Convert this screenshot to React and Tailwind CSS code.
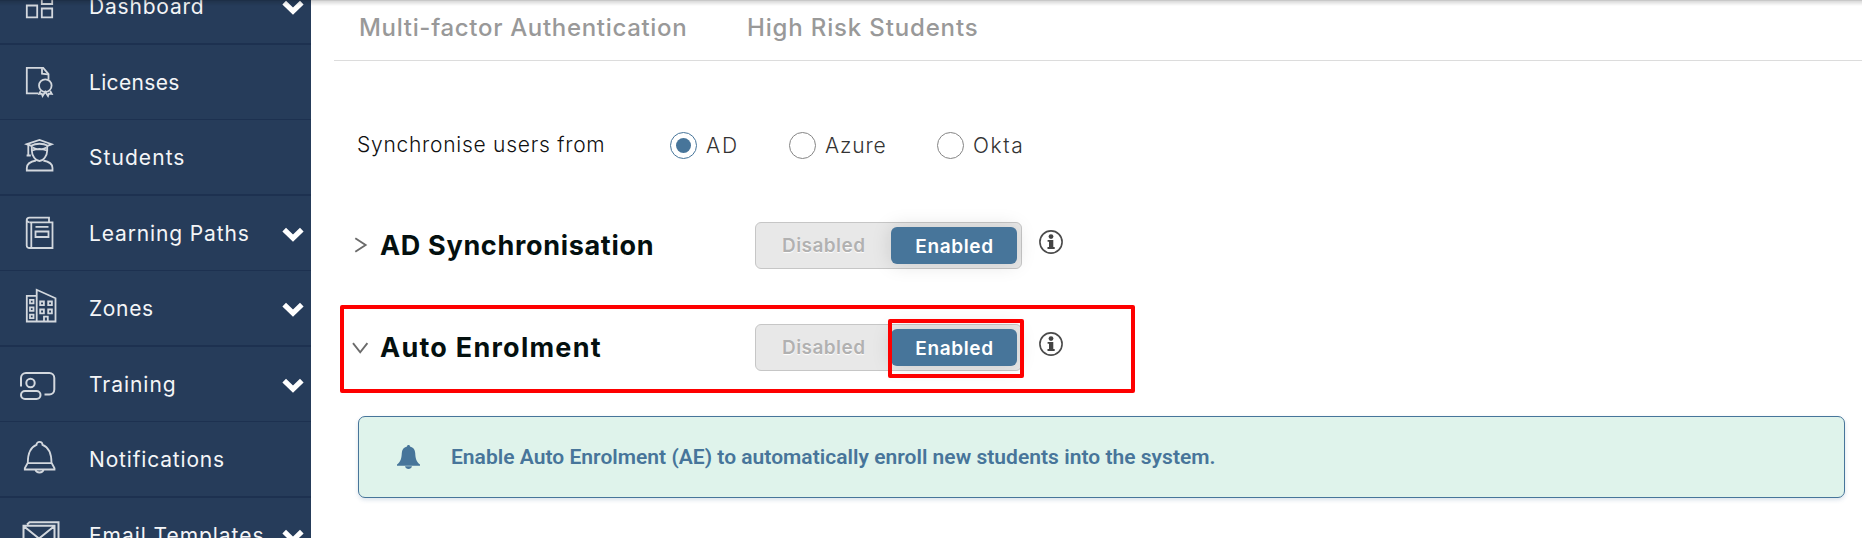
import React from 'react';
import clsx from 'clsx';

// Sidebar icons, all on the same 40x40 grid
const DashboardIcon = () => (
  <path d="M6.8 6h10.4v7H6.8zM21.8 6h10.4v12H21.8zM6.8 19.5h10.4v11.8H6.8zM21.8 22.5h10.4v8.8H21.8z" />
);

const LicenseIcon = () => (
  <>
    <path d="M18.5 31.3H6.8V5.9h16.4l5.3 6.2v5.6" />
    <path d="M22 6.2v5.4l6 .8" />
    <circle cx="25.3" cy="23.6" r="6.3" />
    <path d="M20.5 29l-1.3 3 2.6-.3.8 2.3 2.7-4.3 2.7 4.3.8-2.3 3 .3-1.6-3" />
  </>
);

const StudentIcon = () => (
  <>
    <path d="M6.8 7.2L19.5 3l12.2 4.2L28 8.7c-5-2.6-12-2.6-17 0z" />
    <path d="M8.3 8v10M6.6 18.5h4.2M11.8 9v4.5c0 5.5 4 10.5 7.7 10.5s7.7-5 7.7-10.5V9" />
    <path d="M12 13.5c4.5-2 10.5-2 15 0M12.6 10.5c4 2.5 10 2.5 14 0" />
    <path d="M16 23.5C10.5 24.5 6.8 27 6.8 31v2.5h25.7V31c0-4-3.7-6.5-9.2-7.5" />
  </>
);

const BookIcon = () => (
  <>
    <path d="M9.5 9.3h23V35h-23c-1.6 0-2.8-1-2.8-2.6V7.2c0-1.6 1.2-2.6 2.8-2.6H29v4.5" />
    <path d="M6.9 7.5c.3 1.2 1.2 1.8 2.6 1.8M11.3 9.5v25.3M15.5 13.8h13M15.5 18.5h13V24h-13z" />
  </>
);

const BuildingIcon = () => (
  <>
    <path d="M6.8 7.8h9.9v25.7H6.8zM16.7 33.5V1.8l18.8 8.5v23.2z" />
    <path d="M10 11.8h3.5v3.5H10zM10 19.3h3.5v3.5H10zM10 26.7h3.5v3.5H10z" />
    <path d="M20.2 13.5h3.7v3.7h-3.7zM28.2 13.5h3.7v3.7h-3.7zM20.2 21.5h3.7v3.9h-3.7zM28.2 21.5h3.7v3.9h-3.7zM24 33.5v-4.8h3.8v4.8" />
  </>
);

const TrainingIcon = () => (
  <g strokeWidth="2">
    <path d="M1 22.5V14a5 5 0 0 1 5-5h23.3a5 5 0 0 1 5 5v11.5a5 5 0 0 1-5 5h-4.8" />
    <circle cx="10.5" cy="19" r="4.2" />
    <rect x="1" y="27" width="19.5" height="8" rx="4" />
  </g>
);

const BellIcon = () => (
  <>
    <path d="M16.5 5.8c0-4 6-4 6 0 6.5 2.5 9 8.5 9 18l3 5.4v1.3H4.8v-1.3l3-5.4c0-9.5 2.2-15.5 8.7-18z" />
    <path d="M7.8 24.2h23.5M15.5 30.8c.8 3.6 7.2 3.6 8 0" />
  </>
);

const MailIcon = () => (
  <path strokeWidth="2" d="M3.5 10.8h31v24h-31zM3.5 11L19 23.5 34.5 11M7 9.5l2.5-2.2h29v24" />
);

const menuItems = [
  { label: 'Dashboard', icon: DashboardIcon, expandable: true, tracking: 'tracking-[0.8px]' },
  { label: 'Licenses', icon: LicenseIcon, tracking: 'tracking-[0.33px]' },
  { label: 'Students', icon: StudentIcon, tracking: 'tracking-[1.06px]' },
  { label: 'Learning Paths', icon: BookIcon, expandable: true, tracking: 'tracking-[0.86px]' },
  { label: 'Zones', icon: BuildingIcon, expandable: true, tracking: 'tracking-[0.66px]' },
  { label: 'Training', icon: TrainingIcon, expandable: true, tracking: 'tracking-[0.96px]' },
  { label: 'Notifications', icon: BellIcon, tracking: 'tracking-[0.82px]' },
  { label: 'Email Templates', icon: MailIcon, expandable: true, tracking: 'tracking-[0.95px]' },
];

const Sidebar = () => (
  <aside className="w-[311px] shrink-0 bg-[#263c5a]">
    <nav className="-mt-[31px]">
      {menuItems.map(({ label, icon: Icon, expandable, tracking }, index) => (
        <div
          key={label}
          className={clsx(
            'flex items-center border-[#1d3150] pl-5 pr-[7px]',
            index % 2 === 0 ? 'h-[76px] border-b-2' : 'h-[75px] border-b'
          )}
        >
          <svg className="h-10 w-10 shrink-0" viewBox="0 0 40 40" fill="none" stroke="#d3d8de" strokeWidth="1.8">
            <Icon />
          </svg>
          <span className={clsx('ml-[29px] whitespace-nowrap pt-px text-[21px] text-[#f4f5f7]', tracking)}>{label}</span>
          {expandable && (
            <svg className="ml-auto mt-[2px] h-[15px] w-[22px] shrink-0" viewBox="0 0 22 15" fill="none" stroke="#fff" strokeWidth="5.2">
              <path d="M2.2 2.6L11 11.2l8.8-8.6" />
            </svg>
          )}
        </div>
      ))}
    </nav>
  </aside>
);

const Radio = ({ label, checked, className, labelClass }) => (
  <label className={clsx('flex items-center gap-[9px]', className)}>
    <span
      className={clsx(
        'flex h-[27px] w-[27px] items-center justify-center rounded-full border',
        checked ? 'border-[#47759a]' : 'border-[#858585]'
      )}
    >
      {checked && <span className="h-[15px] w-[15px] rounded-full bg-[#47759a]" />}
    </span>
    <span className={clsx('whitespace-nowrap pt-px text-[21px] font-light text-[#333]', labelClass)}>{label}</span>
  </label>
);

const Toggle = ({ highlighted }) => (
  <div className="relative flex h-[47px] w-[267px] shrink-0 rounded-md border border-[#c6c6c6] bg-[#e8e8e8] p-1">
    <div className="flex w-[131px] items-center pl-[22px] pt-px text-[19px] font-semibold tracking-[0.44px] text-[#b1b1b1] [text-shadow:0_1px_1px_#fff]">
      Disabled
    </div>
    <div className="flex h-[37px] w-[126px] items-center justify-center rounded-md bg-[#47759a] pl-px pt-[3px] text-[19px] font-semibold tracking-[0.65px] text-white shadow-[0_0_20px_rgba(0,0,0,0.13)]">
      Enabled
    </div>
    {highlighted && (
      <div className="absolute -top-[6px] left-[132px] h-[59px] w-[136px] rounded-[2px] border-4 border-[#fe0000]" />
    )}
  </div>
);

const InfoIcon = () => (
  <svg className="mb-[7px] ml-[17px] h-6 w-6" viewBox="0 0 24 24">
    <circle cx="12" cy="12" r="11.1" fill="#fff" stroke="#4b4b4b" strokeWidth="1.6" />
    <circle cx="12" cy="6.6" r="2.4" fill="#444" />
    <path d="M8.6 9.9h5.7v7.2h1.4V19H8.5v-1.9h1.5v-5.3H8.6z" fill="#444" />
  </svg>
);

const SettingRow = ({ title, titleClass, open, highlighted, className }) => (
  <div className={clsx('relative flex h-[47px] items-center pl-10', className)}>
    <svg className="h-[18px] w-[18px] shrink-0" viewBox="0 0 18 18" fill="none" stroke="#6b6b6b" strokeWidth="1.9">
      <path d={open ? 'M2 4.2l7.2 9.1 7.2-9.1' : 'M4.3 1.2L14.6 8 4.3 14.8'} />
    </svg>
    <h2 className={clsx('ml-[11px] w-[375px] whitespace-nowrap pt-[2px] text-[27px] font-bold text-[#04100f]', titleClass)}>{title}</h2>
    <Toggle highlighted={highlighted} />
    <InfoIcon />
    {highlighted && (
      <div className="absolute -top-[19px] left-[29px] h-[88px] w-[795px] rounded-[2px] border-4 border-[#fe0000]" />
    )}
  </div>
);

export default function App() {
  return (
    <div className="relative flex h-[538px] w-[1862px] overflow-hidden bg-white font-['Inter',sans-serif]">
      <Sidebar />

      <main className="flex-1">
        {/* Tabs */}
        <div className="ml-[23px] flex h-[61px] items-center border-b border-[#dcdcdc] pb-[4px] pl-[25px] text-[24px] font-medium text-[#999]">
          <span className="w-[388px] whitespace-nowrap tracking-[0.68px]">Multi-factor Authentication</span>
          <span className="whitespace-nowrap tracking-[0.84px]">High Risk Students</span>
        </div>

        {/* Sync source */}
        <div className="mt-16 flex h-10 items-center pl-[46px]">
          <span className="w-[313px] whitespace-nowrap text-[21px] font-light tracking-[0.74px] text-[#101010]">Synchronise users from</span>
          <Radio label="AD" checked className="w-[119px]" labelClass="tracking-[1.8px]" />
          <Radio label="Azure" className="w-[148px]" labelClass="tracking-[0.85px]" />
          <Radio label="Okta" labelClass="tracking-[1.6px]" />
        </div>

        <SettingRow title="AD Synchronisation" titleClass="tracking-[0.68px]" className="mt-[57px]" />
        <SettingRow title="Auto Enrolment" titleClass="tracking-[1.25px]" className="mt-[55px]" open highlighted />

        {/* Notice */}
        <div className="ml-[47px] mt-[45px] flex h-[82px] w-[1487px] items-center rounded-[7px] border border-[#47759a] bg-[#dff3eb] pl-[38px] shadow-[0_2px_4px_rgba(71,117,154,0.2)]">
          <svg className="h-6 w-[23px]" viewBox="0 0 23 24" fill="#47759a">
            <path d="M11.5 0c1 0 1.5.6 1.5 1.5 3.5.8 5 3.3 5.2 6.5.3 5.5 1 8.7 4.8 11.5v1.3H0v-1.3C3.8 16.7 4.5 13.5 4.8 8c.2-3.2 1.7-5.7 5.2-6.5C10 .6 10.5 0 11.5 0zM8 21.3h7c-.5 1.7-1.8 2.7-3.5 2.7S8.5 23 8 21.3z" />
          </svg>
          <p className="ml-[31px] whitespace-nowrap pt-[2px] font-['Roboto',sans-serif] text-[21px] font-semibold tracking-[0.025px] text-[#47759a]">
            Enable Auto Enrolment (AE) to automatically enroll new students into the system.
          </p>
        </div>
      </main>

      {/* Shadow cast by the fixed header */}
      <div className="absolute inset-x-0 top-0 h-[6px] border-t border-black/20 bg-gradient-to-b from-black/15 to-transparent" />
    </div>
  );
}
